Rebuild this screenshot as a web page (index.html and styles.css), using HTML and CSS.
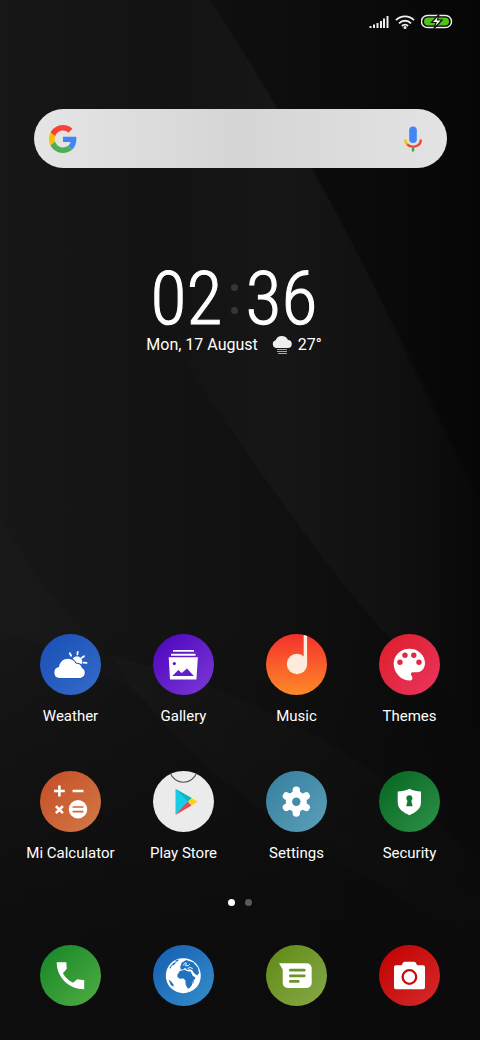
FILE: index.html
```html
<!DOCTYPE html>
<html lang="en">
<head>
  <meta charset="UTF-8">
  <meta name="viewport" content="width=device-width, initial-scale=1.0">
  <title>Home</title>
  <link rel="stylesheet" href="styles.css">
</head>
<body>

  <svg class="wallpaper" viewBox="0 0 480 1040" preserveAspectRatio="none" aria-hidden="true">
    <defs>
      <linearGradient id="base" x1="0" y1="0" x2="1" y2="0">
        <stop offset="0" stop-color="#171717"/>
        <stop offset="0.6" stop-color="#101010"/>
        <stop offset="1" stop-color="#080808"/>
      </linearGradient>
      <linearGradient id="fade" x1="0" y1="0" x2="0" y2="1">
        <stop offset="0.6" stop-color="#0b0b0b" stop-opacity="0"/>
        <stop offset="0.9" stop-color="#0b0b0b" stop-opacity="0.8"/>
      </linearGradient>
      <linearGradient id="band" gradientUnits="userSpaceOnUse" x1="160" y1="0" x2="480" y2="0">
        <stop offset="0" stop-color="#fff" stop-opacity="0"/>
        <stop offset="0.35" stop-color="#fff" stop-opacity="0.025"/>
        <stop offset="0.75" stop-color="#fff" stop-opacity="0.02"/>
        <stop offset="1" stop-color="#fff" stop-opacity="0"/>
      </linearGradient>
    </defs>
    <rect width="480" height="1040" fill="url(#base)"/>
    <path d="M100 0C115 80 130 130 150 300L184 360C230 430 320 560 382 630L480 720V500C400 340 330 180 210 0Z" fill="url(#band)"/>
    <path d="M210 0C280 110 350 230 408 360L480 500V0Z" fill="#000" fill-opacity="0.15"/>
    <path d="M0 520C90 670 250 800 480 900V960C330 860 200 690 0 632Z" fill="#fff" fill-opacity="0.012"/>
    <path d="M110 655C250 690 380 760 480 860V940C330 860 200 790 110 655Z" fill="#fff" fill-opacity="0.02"/>
    <rect width="480" height="1040" fill="url(#fade)"/>
  </svg>

  <div class="screen">
    <header class="status">
      <svg width="20" height="14" viewBox="0 0 20 14" role="img" aria-label="Signal">
        <path d="M1.500 13v-2M5 13v-3.500M8.500 13V8M12 13V6M15 13V3.500M18.500 13V1" stroke="#eee" stroke-width="2"/>
      </svg>
      <svg width="20" height="14" viewBox="0 0 20 14" role="img" aria-label="Wi-Fi">
        <g fill="none" stroke="#eee" stroke-width="1.900">
          <path d="M1 5.200a12.500 12.500 0 0 1 18 0"/>
          <path d="M4 8.300a8.400 8.400 0 0 1 12 0"/>
          <path d="M6.900 11a4.500 4.500 0 0 1 6.200 0"/>
        </g>
        <circle cx="10" cy="12.500" r="1.500" fill="#eee"/>
      </svg>
      <svg width="32" height="15" viewBox="0 0 32 15" role="img" aria-label="Battery charging">
        <path d="M6.500 1.500h18a6 6 0 0 1 0 12h-18a6 6 0 0 1 0-12Z" fill="#000" stroke="#eee" stroke-width="1.500"/>
        <rect x="3" y="3.500" width="25" height="8" rx="4" fill="#4fc414"/>
        <path d="M18 0.500 10.500 8.500h4.500L13 14.500l8-8.500h-4.500Z" fill="#fff" stroke="#111" stroke-width="1.200"/>
      </svg>
    </header>

    <form class="search" role="search">
      <svg width="28" height="28" viewBox="2 2 44 44" role="img" aria-label="Google">
        <g transform="translate(2 2) scale(.916)">
          <path fill="#f44336" d="M24 9.500c3.540 0 6.710 1.220 9.210 3.600l6.850-6.850C35.900 2.380 30.470 0 24 0 14.620 0 6.510 5.380 2.560 13.220l7.980 6.190C12.430 13.720 17.740 9.500 24 9.500z"/>
          <path fill="#4285f4" d="M46.980 24.550c0-1.570-.15-3.090-.38-4.550H24v9.020h12.940c-.58 2.960-2.260 5.480-4.780 7.180l7.730 6c4.510-4.180 7.090-10.360 7.090-17.650z"/>
          <path fill="#fbbc05" d="M10.530 28.590c-.48-1.450-.76-2.990-.76-4.590s.27-3.140.76-4.590l-7.980-6.190C.92 16.460 0 20.120 0 24c0 3.880.92 7.540 2.560 10.780l7.970-6.190z"/>
          <path fill="#4caf50" d="M24 48c6.480 0 11.930-2.130 15.890-5.810l-7.730-6c-2.150 1.450-4.920 2.300-8.160 2.300-6.260 0-11.570-4.220-13.470-9.910l-7.980 6.190C6.510 42.620 14.620 48 24 48z"/>
        </g>
      </svg>
      <input class="search-input" type="text" aria-label="Search">
      <button class="mic" type="button" aria-label="Voice search">
        <svg width="18" height="26" viewBox="0 0 18 26">
          <rect x="5.200" y="0.500" width="7.600" height="16.500" rx="3.800" fill="#4285f4"/>
          <path d="M1.200 13.500q0 3 2.300 5.200" fill="none" stroke="#fbbc05" stroke-width="2.300"/>
          <path d="M3.200 18.400C6.500 21.600 16.800 22 16.800 13.500" fill="none" stroke="#f44336" stroke-width="2.300"/>
          <path d="M9 21.500v4" stroke="#34a853" stroke-width="2.400"/>
        </svg>
      </button>
    </form>

    <section class="clock">
      <div class="time">
        <span>02</span>
        <span class="colon"><i></i><i></i></span>
        <span>36</span>
      </div>
      <div class="today">
        <span>Mon, 17 August</span>
        <svg width="20" height="20" viewBox="0 0 20 20" role="img" aria-label="Fog">
          <path d="M4.500 13A4 4 0 0 1 3.600 5.200 6.700 6.700 0 0 1 16 5a4 4 0 0 1-.5 8Z" fill="#eee"/>
          <path d="M5 14.500h10M5 16.500h10M6 18.500h9" stroke="#aaa" stroke-width="1"/>
        </svg>
        <span>27°</span>
      </div>
    </section>

    <main class="apps">
      <a class="app" href="#">
        <svg class="icon weather" viewBox="0 0 61 61">
          <circle cx="37" cy="27.500" r="5.200" fill="#fff"/>
          <path d="m29.800 19.300 1.300 2.400M37.700 17.800l-.3 2.700M44 22.200l-2.200 1.600M43.500 28.700l3 .2" stroke="#fff" stroke-width="1.800" stroke-linecap="round"/>
          <path d="M19.300 44A5.500 5.500 0 0 1 19 33.100C19.500 28 23.500 24.700 28 24.700c4 0 6.600 2.200 7.900 5 3.300-.4 5.600 1.400 5.900 4.200 2 .7 3 2.400 3 4.600 0 3.200-2.300 5.500-5.500 5.500Z" fill="#fff" stroke="#225abb" stroke-width="2" paint-order="stroke"/>
        </svg>
        <span>Weather</span>
      </a>
      <a class="app" href="#">
        <svg class="icon gallery" viewBox="0 0 61 61">
          <path d="M20 16h21v1.800H20ZM18 19.700h24.500v2H18ZM15.700 23.200h29.200l-1.500 22.300H17Z" fill="#fff"/>
          <circle cx="21.300" cy="29.500" r="1.600" fill="#5a14c4"/>
          <path d="m19.300 41.900 6-5.800 3.400 3 5.300-4.700 6.900 7.500Z" fill="#651fc9"/>
        </svg>
        <span>Gallery</span>
      </a>
      <a class="app" href="#">
        <svg class="icon music" viewBox="0 0 61 61">
          <path d="M37.700 1h3.400v29h-3.400Z" fill="#fdebdc"/>
          <circle cx="31" cy="30" r="10.200" fill="#fdebdc"/>
        </svg>
        <span>Music</span>
      </a>
      <a class="app" href="#">
        <svg class="icon themes" viewBox="0 0 61 61">
          <path d="M30.500 14.700C22 14.700 14.700 21 14.700 29.500c0 9.500 7.300 17 16.300 17 2.500 0 3-2.400 1.700-4.500-1.500-2.300-.7-3.800 1.800-3.800H38c5 0 8-4.200 8-9.200 0-8-7-14.300-15.500-14.300Z" fill="#fff"/>
          <g fill="#e42740">
            <circle cx="21" cy="28.300" r="2.700"/>
            <circle cx="26" cy="21.300" r="2.700"/>
            <circle cx="34.800" cy="21.300" r="2.700"/>
            <circle cx="40" cy="28.300" r="2.700"/>
          </g>
        </svg>
        <span>Themes</span>
      </a>
      <a class="app" href="#">
        <svg class="icon calculator" viewBox="0 0 61 61">
          <path d="M14 20h10.800M19.400 14.600v10.800M32.600 20h10.800M15.900 35.200l7 7M22.900 35.200l-7 7" stroke="#fff" stroke-width="2.600"/>
          <circle cx="38" cy="38.300" r="9.200" fill="#fff"/>
          <path d="M32.600 36h10.800M32.600 40.600h10.800" stroke="#cf6638" stroke-width="1.600"/>
        </svg>
        <span>Mi Calculator</span>
      </a>
      <a class="app" href="#">
        <svg class="icon play" viewBox="0 0 61 61">
          <path d="M17.300 2a13.900 13.900 0 0 0 26.200 0" fill="none" stroke="#555" stroke-width="1.100"/>
          <path d="M22.500 17.700 22.500 43.700 37.500 30.700Z" fill="#18cbe6"/>
          <path d="m22.500 17.700 16.300 9.200-3.500 3.800Z" fill="#0fb5b8"/>
          <path d="M38.700 26.900 44.800 30.700 38.500 34.600 34.600 30.700Z" fill="#fdd017"/>
          <path d="m22.500 43.900 12.100-13.200 3.900 3.900Z" fill="#ef4550"/>
        </svg>
        <span>Play Store</span>
      </a>
      <a class="app" href="#">
        <svg class="icon settings" viewBox="0 0 61 61">
          <circle cx="30.300" cy="30.700" r="10.500" fill="#fff"/>
          <g stroke="#fff" stroke-width="7.400" stroke-linecap="round">
            <path d="M30.300 19.300v22.800"/>
            <path d="M30.300 19.300v22.800" transform="rotate(60 30.300 30.700)"/>
            <path d="M30.300 19.300v22.800" transform="rotate(120 30.300 30.700)"/>
          </g>
          <circle cx="30.300" cy="30.700" r="4.200" fill="#428bab"/>
        </svg>
        <span>Settings</span>
      </a>
      <a class="app" href="#">
        <svg class="icon security" viewBox="0 0 61 61">
          <path d="M30.400 17.700c3.600 1.700 7.600 2.600 11.600 2.800v10.800c0 6.500-5.300 10.200-11.600 12.900-6.300-2.700-11.700-6.400-11.700-12.900V20.500c4-.2 8.100-1.100 11.700-2.800Z" fill="#fff"/>
          <path d="m29 28-1.800 7.200h6.400L31.800 28Z" fill="#127a30"/>
          <circle cx="30.400" cy="27.300" r="3" fill="#127a30"/>
        </svg>
        <span>Security</span>
      </a>
    </main>

    <div class="pages">
      <i class="current"></i>
      <i></i>
    </div>

    <nav class="dock">
      <a class="app" href="#" aria-label="Phone">
        <svg class="icon phone" viewBox="0 0 61 61">
          <path d="M16.700 17.300h9.600l.5 6.500-3.900 4.400c2.300 4.200 5.800 7.500 10.100 9.600l4.300-3.500 6.900 1v9C29 44.300 16.700 32.500 16.700 17.300Z" fill="#fff"/>
        </svg>
      </a>
      <a class="app" href="#" aria-label="Browser">
        <svg class="icon browser" viewBox="0 0 61 61">
          <circle cx="30.300" cy="30.700" r="17.500" fill="#fff"/>
          <g fill="#2273bd">
            <path d="m24.500 29.500 2.300-3.400 5-1.300 2.300 1.500 3.600.2 2 4.300 3 2-3.300 4.200-.4 3-2.700 3.300-1.600.1-2.100-4-.2-4-2-1.900-3.700.2-2.200-1.800Z"/>
            <path d="m27.300 21.800 1.300-4 4.500-2.800 7 2.300 4.700 5.200 1.300 5.400-2 2.600-3.300-2.500-1.700-3-2.800-.8-2 .8-2.400-2.200-1.600 1.600-2.700.2Z"/>
            <path d="m15.500 34.500 2.700 2 2.300 3-.2 2.600-2.600-2.300Z"/>
            <path d="m16.500 22.500 3.800-4.500 3.200-1.300-2 2.800-2.500 1.300-2 3.300ZM22.500 15.600l3.200-1.200-.5 1.500-2.500 1Z"/>
            <path d="m39.800 36.500.9-1.200-.4 3.200-.8.500Z"/>
          </g>
          <path d="m30 20.500 2.200-2.700 1.500.5-1.500 2.300 3 .2 1.500-1.600M34.500 23.500l2.500-1 2.800 1" fill="none" stroke="#fff" stroke-width="0.900"/>
        </svg>
      </a>
      <a class="app" href="#" aria-label="Messages">
        <svg class="icon messages" viewBox="0 0 61 61">
          <path d="M13 18.300h27.700a5 5 0 0 1 5 5V38a5 5 0 0 1-5 5h-19a5 5 0 0 1-5-5V24.500Z" fill="#fff"/>
          <path d="M24.300 25.200h14M24.300 30.800h14M24.300 36.400h8" stroke="#6d942a" stroke-width="2.700" stroke-linecap="round"/>
        </svg>
      </a>
      <a class="app" href="#" aria-label="Camera">
        <svg class="icon camera" viewBox="0 0 61 61">
          <path d="M17 20.300h5.500l1.700-2.700q.6-.9 1.600-.9h9.200q1 0 1.600.9l1.700 2.700H44a2 2 0 0 1 2 2v20a2 2 0 0 1-2 2H17a2 2 0 0 1-2-2v-20a2 2 0 0 1 2-2Z" fill="#fff"/>
          <circle cx="30.400" cy="32" r="6.800" fill="none" stroke="#cc0b0b" stroke-width="2.300"/>
        </svg>
      </a>
    </nav>
  </div>

</body>
</html>
```
FILE: styles.css
```css
* {
  box-sizing: border-box;
}
body {
  font-family: Roboto, "Liberation Sans", sans-serif;
  margin: 0;
  background: #0e0e0e;
  color: #fff;
}
.wallpaper {
  position: absolute;
  top: 0;
  left: 0;
  width: 100%;
  height: 100%;
  z-index: -1;
}
.screen {
  display: flex;
  flex-direction: column;
  min-height: 100vh;
  padding-bottom: 34px;
}
.status {
  display: flex;
  justify-content: flex-end;
  align-items: center;
  gap: 6px;
  height: 43px;
  padding-right: 27px;
}
.search {
  display: flex;
  align-items: center;
  height: 59px;
  margin: 66px 33px 0 34px;
  padding: 0 25px 0 15px;
  border-radius: 30px;
  background: linear-gradient(90deg, #e5e5e5, #d5d5d5 50%, #e3e3e3);
}
.search-input {
  flex: 1;
  min-width: 0;
  height: 100%;
  border: none;
  outline: none;
  background: none;
  font-size: 16px;
}
.mic {
  display: flex;
  padding: 0;
  border: none;
  background: none;
  cursor: pointer;
}
.clock {
  display: flex;
  flex-direction: column;
  align-items: center;
  margin-top: 95px;
  padding-right: 12px;
}
.time {
  display: flex;
  align-items: center;
  gap: 8px;
  font-family: "Roboto Condensed", Roboto, sans-serif;
  font-size: 74px;
  font-weight: 300;
  line-height: 72px;
  -webkit-text-stroke: 1px #fff;
}
.colon {
  display: flex;
  flex-direction: column;
  gap: 16px;
}
.colon i {
  width: 7px;
  height: 7px;
  border-radius: 50%;
  background: #363636;
}
.today {
  display: flex;
  align-items: center;
  font-size: 16px;
  line-height: 20px;
}
.today svg {
  margin: 0 6px 0 14px;
}
.apps,
.dock {
  display: grid;
  grid-template-columns: repeat(4, 1fr);
  padding: 0 14px;
}
.apps {
  row-gap: 45px;
  margin-top: auto;
}
.app {
  display: flex;
  flex-direction: column;
  align-items: center;
  gap: 11px;
  color: #fff;
  font-size: 15px;
  line-height: 20px;
  text-decoration: none;
  white-space: nowrap;
}
.icon {
  width: 61px;
  height: 61px;
  border-radius: 50%;
}
.weather { background: linear-gradient(135deg, #184fb5, #356bc9); }
.gallery { background: linear-gradient(135deg, #4c02bd, #7b3bd6); }
.music { background: linear-gradient(#f5302d, #fd8a28); }
.themes { background: linear-gradient(135deg, #dc1d28, #ec3560); }
.calculator { background: linear-gradient(135deg, #c64c26, #d27a48); }
.play { background: #ebebeb; }
.settings { background: linear-gradient(135deg, #357f9f, #5c9fb9); }
.security { background: linear-gradient(135deg, #04651f, #2e9149); }
.phone { background: linear-gradient(135deg, #148427, #52ae43); }
.browser { background: linear-gradient(135deg, #155cb0, #358fcb); }
.messages { background: linear-gradient(135deg, #5f8915, #86a948); }
.camera { background: linear-gradient(135deg, #c00000, #d72a2a); }
.pages {
  display: flex;
  justify-content: center;
  gap: 10px;
  margin: 36px 0 39px;
}
.pages i {
  width: 7px;
  height: 7px;
  border-radius: 50%;
  background: #5a5a5a;
}
.pages .current {
  background: #fff;
}
```
